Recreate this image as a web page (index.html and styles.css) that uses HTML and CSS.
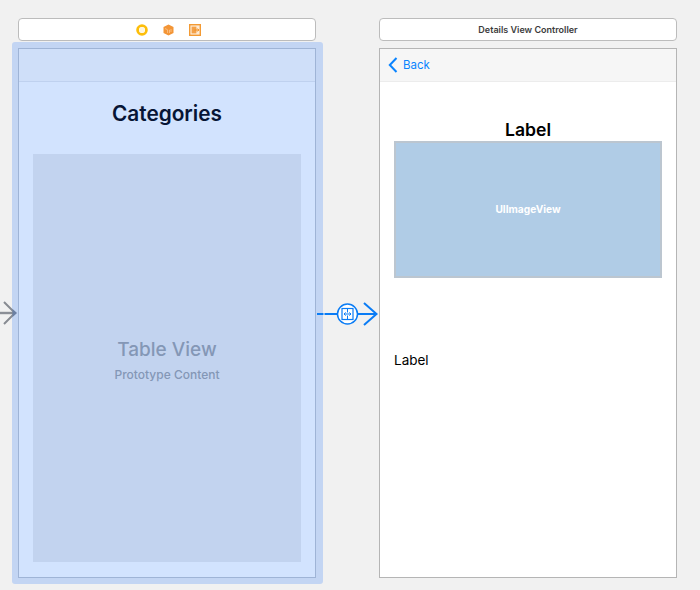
FILE: index.html
```html
<!DOCTYPE html>
<html>
  <head>
    <title>Storyboard</title>
    <link rel="stylesheet" href="styles.css">
  </head>
  <body>
    <div class="canvas">
      <!-- Categories scene -->
      <section class="scene">
        <div class="scene-title icons">
          <svg width="12" height="12" viewBox="0 0 12 12">
            <circle cx="6" cy="6" r="4.4" fill="#fff" stroke="#fdbe0a" stroke-width="2.8" />
            <rect x="3.5" y="3.5" width="5" height="5" rx="0.8" fill="#fff6dc" />
          </svg>
          <svg width="11" height="12" viewBox="0 0 11 12">
            <path d="M5.5 0.5 10.5 3V9L5.5 11.5 0.5 9V3Z" fill="#f39536" />
            <path d="M2 4.5 4.6 5.8V9M8 5V8M6.5 5.8V9" fill="none" stroke="#fbc792" stroke-width="0.8" />
          </svg>
          <svg width="12" height="12" viewBox="0 0 12 12">
            <rect x="0.7" y="0.7" width="10.6" height="10.6" fill="#fdebd6" stroke="#f39a33" stroke-width="1.4" />
            <path d="M2.6 2.6H7.4V9.4H2.6Z" fill="#f4a148" />
            <path d="M5.5 6H9.8M8.3 4.5 9.8 6 8.3 7.5" fill="none" stroke="#f08c1e" stroke-width="1" />
          </svg>
        </div>
        <div class="selection">
          <div class="frame frame-selected">
            <div class="navbar navbar-selected"></div>
            <h1 class="screen-title">Categories</h1>
            <div class="table-view">
              <div class="table-name">Table View</div>
              <div class="table-note">Prototype Content</div>
            </div>
          </div>
        </div>
        <svg class="entry-arrow" width="18" height="26" viewBox="0 0 18 26">
          <path d="M0 13H13" stroke="#8b8f96" stroke-width="2.4" />
          <path d="M4 2 15 13 4 24" fill="none" stroke="#878b92" stroke-width="2" />
          <path d="M12.5 9 17 13 12.5 17Z" fill="#6b80a3" />
        </svg>
      </section>

      <!-- Details scene -->
      <section class="scene">
        <div class="scene-title">Details View Controller</div>
        <div class="frame">
          <div class="navbar">
            <svg width="10" height="16" viewBox="0 0 10 16">
              <path d="M8.5 1 1.8 8 8.5 15" fill="none" stroke="#0a84ff" stroke-width="2" />
            </svg>
            <span class="back">Back</span>
          </div>
          <div class="details">
            <div class="label-title">Label</div>
            <div class="image-view">UIImageView</div>
            <div class="label-body">Label</div>
          </div>
        </div>
      </section>

      <!-- Segue between the scenes -->
      <svg class="segue" width="62" height="26" viewBox="0 0 62 26">
        <path d="M0 13H6.5M7.5 13H21M40 13H59" stroke="#0a7cf5" stroke-width="2" fill="none" />
        <path d="M47 2 59.5 13 47 24" stroke="#0a7cf5" stroke-width="2" fill="none" />
        <circle cx="30.5" cy="13" r="10" fill="#fff" stroke="#0a7cf5" stroke-width="1.5" />
        <rect x="25" y="7.5" width="11" height="11" fill="none" stroke="#0a7cf5" stroke-width="1.2" />
        <path d="M30.5 7.5V11.5M30.5 14.5V18.5M27 13H34M28.6 11.4 27 13 28.6 14.6M32.4 11.4 34 13 32.4 14.6" stroke="#0a7cf5" stroke-width="1" fill="none" />
      </svg>
    </div>
  </body>
</html>
```

FILE: styles.css
```css
body {
  margin: 0;
  background-color: #f1f1f1;
  font-family: Inter, "Liberation Sans", sans-serif;
  overflow: hidden;
}

.canvas {
  position: relative;
  display: flex;
  gap: 63px;
  width: 700px;
  height: 590px;
  padding: 18px 0 0 18px;
  box-sizing: border-box;
}

.scene {
  position: relative;
  display: flex;
  flex-direction: column;
  width: 298px;
  flex-shrink: 0;
}

.scene-title {
  display: flex;
  align-items: center;
  justify-content: center;
  height: 23px;
  margin-bottom: 7px;
  box-sizing: border-box;
  background-color: #fff;
  border: 1px solid #bcbcbc;
  border-radius: 4px;
  font-size: 9px;
  font-weight: 600;
  color: #3c3c3c;
}

.icons {
  gap: 15px;
  padding-left: 2px;
}

.selection {
  margin: -6px -7px -6px -6px;
  padding: 6px 7px 6px 6px;
  background-color: #c3d5f3;
  border-radius: 3px;
}

.frame {
  height: 530px;
  box-sizing: border-box;
  background-color: #fff;
  border: 1px solid #b5b5b5;
  display: flex;
  flex-direction: column;
}

.frame-selected {
  background-color: #d2e3fe;
  border-color: #9fb4d6;
  align-items: center;
}

.navbar {
  display: flex;
  align-items: center;
  gap: 5px;
  align-self: stretch;
  height: 32px;
  flex-shrink: 0;
  padding-left: 8px;
  background-color: #f6f6f6;
  border-bottom: 1px solid #ececec;
}

.navbar-selected {
  background-color: #cfdff9;
  border-bottom-color: #bfd1ef;
}

.back {
  font-size: 11.5px;
  color: #0a84ff;
}

.screen-title {
  margin: 22px 0 0;
  height: 20px;
  line-height: 20px;
  font-size: 20.8px;
  font-weight: 600;
  color: #071535;
}

.table-view {
  display: flex;
  flex-direction: column;
  align-items: center;
  justify-content: center;
  width: 268px;
  height: 408px;
  margin-top: 30px;
  padding-top: 4px;
  box-sizing: border-box;
  background-color: #c2d3ef;
}

.table-name {
  font-size: 19px;
  font-weight: 500;
  color: #8497b6;
}

.table-note {
  margin-top: 6px;
  font-size: 12px;
  font-weight: 500;
  color: #8497b6;
}

.details {
  display: flex;
  flex-direction: column;
  padding: 37px 14px 0;
}

.label-title {
  height: 22px;
  line-height: 22px;
  text-align: center;
  font-size: 17.6px;
  font-weight: 600;
  color: #000;
}

.image-view {
  display: flex;
  align-items: center;
  justify-content: center;
  height: 137px;
  padding-bottom: 2px;
  box-sizing: border-box;
  background-color: #b0cce6;
  border: 2px solid #bcc6d0;
  font-size: 10.2px;
  font-weight: 700;
  color: #fff;
}

.label-body {
  margin-top: 73px;
  height: 18px;
  line-height: 18px;
  font-size: 13.5px;
  color: #000;
}

.entry-arrow {
  position: absolute;
  left: -18px;
  top: 282px;
}

.segue {
  position: absolute;
  left: 317px;
  top: 301px;
}
```
